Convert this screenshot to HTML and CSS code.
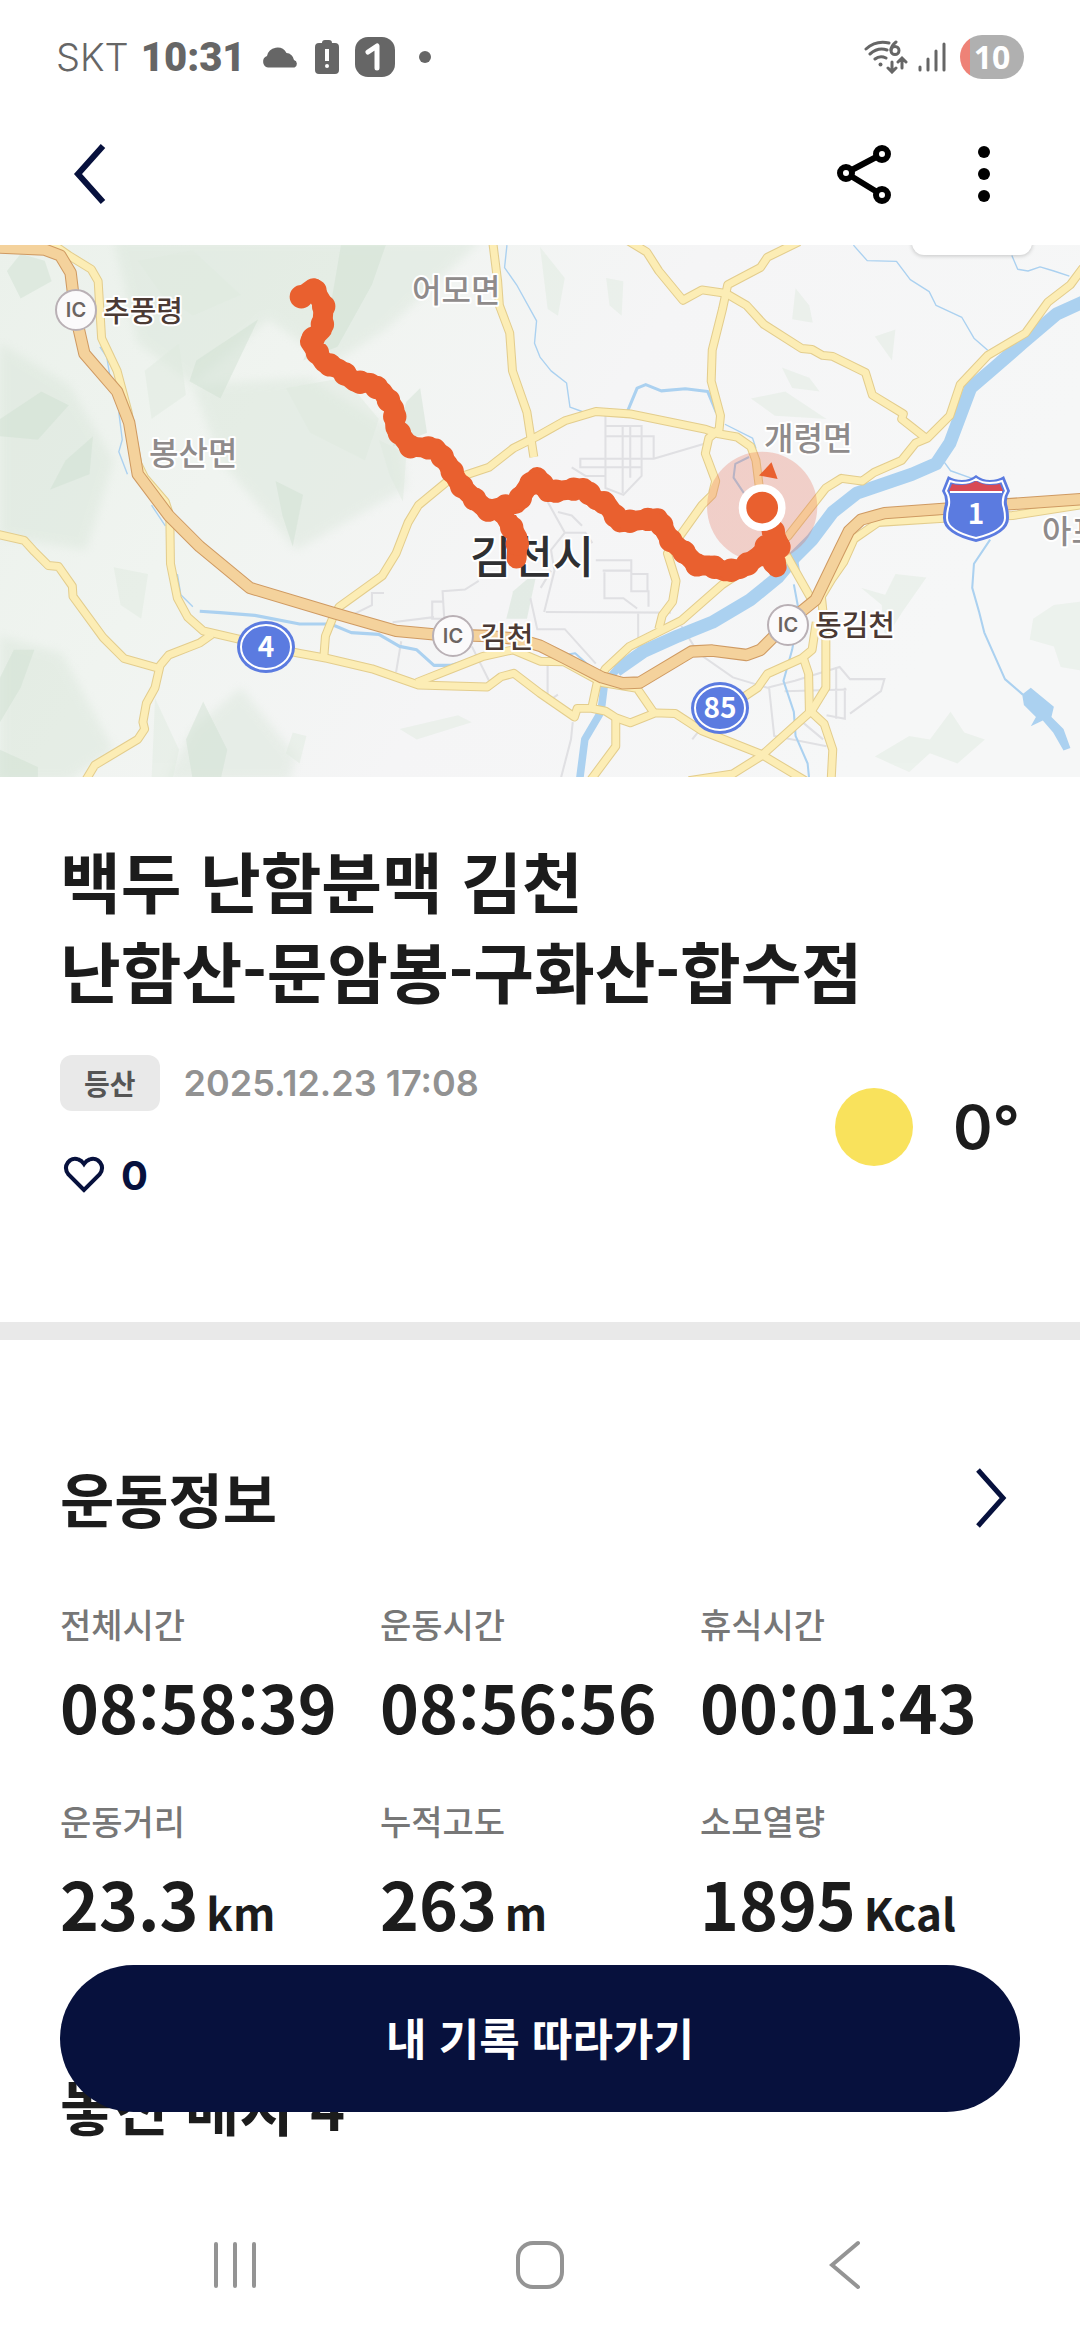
FILE: index.html
```html
<!DOCTYPE html>
<html lang="ko">
<head>
  <meta charset="UTF-8">
  <meta name="viewport" content="width=device-width, initial-scale=1">
  <title>운동 기록</title>
  <link rel="stylesheet" href="styles.css">
</head>
<body>
  <div class="statusbar">
    <div class="status-left">
      <span class="carrier">SKT</span>
      <span class="clock">10:31</span>
      <svg class="ico-cloud" width="37" height="22" viewBox="0 0 37 22"><path d="M6 21.500a6 6 0 0 1-1-11.500A10.500 10.500 0 0 1 24.500 7 8 8 0 0 1 32 14a4 4 0 0 1 .5 7.500z" fill="#666"/></svg>
      <svg class="ico-alert" width="24" height="34" viewBox="0 0 24 34"><path d="M7 3a3 3 0 0 1 3-3h4a3 3 0 0 1 3 3h3a4 4 0 0 1 4 4v23a4 4 0 0 1-4 4H4a4 4 0 0 1-4-4V7a4 4 0 0 1 4-4z" fill="#666"/><path d="M10 9h4v12h-4z" fill="#fff"/><circle cx="12" cy="26" r="2" fill="#fff"/></svg>
      <svg class="ico-one" width="40" height="40" viewBox="0 0 40 40"><rect width="40" height="40" rx="13" fill="#666"/><path d="M13 15l9-6v22" fill="none" stroke="#fff" stroke-width="5" stroke-linecap="round" stroke-linejoin="round"/></svg>
      <span class="more-dot"></span>
    </div>
    <div class="status-right">
      <svg width="44" height="34" viewBox="0 0 44 34" fill="none" stroke="#666" stroke-width="3" stroke-linecap="round">
        <path d="M2 9Q12 0 25 3M6 14q8-7 17-4M11 19q5-4 11-1"/>
        <circle cx="16.500" cy="24.500" r="2" fill="#666" stroke="none"/>
        <path d="M32 2q-5 4-5 8" stroke-width="3"/><circle cx="31" cy="10.500" r="4" stroke-width="3"/>
        <path d="M28 22v9M24 28l4 4 4-4M38 28v-9M34 22l4-4 4 4"/>
      </svg>
      <svg width="28" height="32" viewBox="0 0 28 32" stroke="#666" stroke-width="3" stroke-linecap="round"><path d="M2 26v3M10 18v11M18 10v19M26 3v26"/></svg>
      <span class="battery">10</span>
    </div>
  </div>

  <header class="appbar">
    <button type="button" class="icon-btn" aria-label="뒤로">
      <svg width="34" height="62" viewBox="0 0 34 62"><path d="M31 3L6 31l25 28" fill="none" stroke="#07113d" stroke-width="6"/></svg>
    </button>
    <div class="actions">
      <button type="button" class="icon-btn" aria-label="공유">
        <svg width="54" height="60" viewBox="0 0 54 60" fill="none" stroke="#000" stroke-width="6"><path d="M9 29L45 10M9 29l36 22"/><g fill="#fff"><circle cx="9" cy="29" r="6"/><circle cx="45" cy="10" r="6"/><circle cx="45" cy="51" r="6"/></g></svg>
      </button>
      <button type="button" class="icon-btn" aria-label="더보기">
        <svg width="12" height="58" viewBox="0 0 12 58"><circle cx="6" cy="7" r="6"/><circle cx="6" cy="29" r="6"/><circle cx="6" cy="51" r="6"/></svg>
      </button>
    </div>
  </header>

  <div class="map">
    <svg viewBox="0 0 1080 532" preserveAspectRatio="xMidYMid slice">
      <defs>
        <linearGradient id="land" x1="0" y1="0" x2="1" y2=".3">
          <stop offset="0" stop-color="#ebf1eb"/>
          <stop offset=".3" stop-color="#f0f4f0"/>
          <stop offset=".6" stop-color="#f5f5f6"/>
          <stop offset="1" stop-color="#f6f7f7"/>
        </linearGradient>
        <filter id="soft"><feGaussianBlur stdDeviation="14"/></filter>
        <g id="roads">
          <path d="M150 10L200 45 265 85 285 120 295 285 340 380 372 500 400 650 420 690 480 760 493 800 495 940 515 1040 545 1095 590 1135 690 1158 770 1180 870 1200 950 1215 1080 1245 1215 1292 1415 1298 1455 1268 1492 1258 1568 1316 1668 1385 1676 1360 1718 1360 1758 1368 1788 1387 1830 1402 1903 1373 1961 1375 2038 1425 2208 1492 2338 1570"/>
          <path d="M-5 855L70 872 100 905 140 945 170 948 210 1005 212 1035 300 1155 360 1215 455 1242M615 1145L580 1170 490 1205 465 1235 450 1300 425 1345 415 1400 420 1420 400 1450 275 1525 245 1575"/>
          <path d="M940 1215L945 1150 965 1100 985 1065 1110 975 1150 910 1185 820 1215 770 1300 700 1420 660 1490 605 1560 570 1640 525 1730 498 1830 505 2050 550 2088 563 2140 572 2180 600 2195 640 2205 720"/>
          <path d="M1430 0L1445 120 1450 190 1480 270 1488 380 1530 500 1550 630"/>
          <path d="M1210 1285L1400 1210 1490 1190 1568 1223 1638 1225 1748 1285 1850 1302 1898 1372"/>
          <path d="M1718 1360L1733 1290 1758 1245 1828 1180 1978 1105 2098 1000 2218 920 2288 860 2398 720 2443 692 2503 700 2538 675 2618 640 2658 590 2693 575 2758 510 2788 420 2868 335 2978 270 3043 180 3108 130 3145 80"/>
          <path d="M1913 1130L1923 1090 1953 1050 1963 990 1938 910 1988 840 2038 770 2068 740 2078 700 2048 620 2058 575 2088 550 2092 510 2065 410 2068 320 2098 200 2113 130 2208 80 2228 50 2320 5"/>
          <path d="M1820 0L1878 35 1913 90 1983 175 2038 145 2108 155 2168 190 2218 245 2328 315 2358 318 2388 335 2418 338 2513 385 2533 450 2623 505 2618 520 2688 575"/>
          <path d="M2278 905L2360 1050M3145 768L2940 800 2740 808 2550 820 2480 868 2450 935 2415 985 2385 1035 2398 1160 2398 1300 2358 1365 2258 1455 2208 1500 2128 1550 2000 1570"/>
          <path d="M2370 1110L2358 1190 2328 1215 2228 1260 2200 1300 2140 1340M2333 1215L2348 1260 2350 1365 2393 1405 2418 1480 2413 1575M1788 1387L1788 1470 1710 1575"/>
        </g>
        <path id="highway" d="M-5 22L130 28 175 45 205 95 220 220 245 330 340 440 375 530 400 680 490 800 580 890 725 1010 975 1085 1150 1135 1260 1145 1420 1150 1500 1158 1568 1178 1638 1213 1748 1270 1808 1287 1858 1285 2008 1195 2068 1192 2168 1205 2208 1190 2288 1110 2368 1045 2438 900 2465 845 2500 812 2568 793 2748 780 3145 752"/>
        <path id="track" d="M875 165L910 140 940 190 935 260 900 295 940 355 985 375 1030 412 1075 415 1110 440 1145 490 1148 545 1190 600 1265 605 1300 650 1335 710 1375 750 1415 785 1500 765 1530 720 1560 688 1590 732 1695 720 1730 755 1760 765 1800 820 1910 808 1945 870 1990 910 2025 945 2060 945 2105 962 2150 955 2200 920 2265 890 2225 800M2225 890L2255 950M1460 790L1503 865 1500 925"/>
      </defs>
      <rect width="1080" height="532" fill="url(#land)"/>

      <g transform="translate(0 -5) scale(.3444)">
        <!-- hills -->
        <g fill="#d5e3d6" opacity=".4" filter="url(#soft)">
          <path d="M330 0H1400L1120 260 960 360 780 230 560 420 400 300z"/>
          <path d="M0 300L200 420 330 640 250 900 0 860z"/>
          <path d="M560 420L900 400 1160 560 1180 720 860 900 640 640z"/>
          <path d="M0 1150L180 1200 330 1480 200 1570 0 1570z"/>
          <path d="M560 1420L700 1300 860 1500 840 1570 480 1570z"/>
        </g>
        <g fill="#cfe0d1" opacity=".45">
          <path d="M990 15H1120L1080 130 980 310 880 350 960 190z"/>
          <path d="M750 230L640 460 550 410 570 350z"/>
          <path d="M0 520L120 440 200 480 110 580 0 570z"/>
          <path d="M270 570L260 680 145 725 190 640z"/>
          <path d="M800 700L880 740 850 890 820 800z"/>
          <path d="M1220 430L1240 560 1140 600 1180 470z"/>
          <path d="M40 1190L100 1190 60 1300 0 1400V1270z"/>
          <path d="M590 1340L660 1480 640 1570 560 1570 540 1450z"/>
          <path d="M0 1480L110 1530V1570H0z"/>
          <path d="M60 40L130 60 150 120 60 170 20 90z"/>
          <path d="M1490 1020L1560 960 1530 1100 1470 1100z"/>
        </g>
        <g fill="#dfeadf" opacity=".45">
          <path d="M400 60L560 30 700 160 560 220 470 160z"/>
          <path d="M420 380L520 300 540 450 440 520z"/>
          <path d="M830 430L1000 400 1100 520 1060 640 900 560z"/>
          <path d="M1100 580L1180 620 1170 760 1130 680z"/>
          <path d="M330 950L430 970 410 1100 350 1060z"/>
          <path d="M450 1330L520 1480 500 1570H440z"/>
          <path d="M850 1430L890 1440 870 1520 830 1490z"/>
          <path d="M1160 1420L1330 1380 1370 1400 1210 1450z"/>
          <path d="M1568 20L1640 110 1620 220 1590 200zM1760 110L1810 120 1805 220 1770 190z"/>
          <path d="M2310 140L2350 190 2360 240 2300 230zM2180 460L2280 440 2400 520 2250 510z"/>
          <path d="M2500 1010L2570 1030 2600 970 2690 980 2620 1080 2570 1160 2560 1060z"/>
          <path d="M3000 1100L3060 1060 3140 1050V1250L3080 1240 3060 1180 2990 1160z"/>
          <path d="M2540 1500L2640 1440 2700 1450 2760 1370 2800 1430 2860 1450 2780 1520 2700 1490 2640 1545z"/>
          <path d="M2270 370L2350 400 2380 440 2300 430zM2540 280L2600 260 2590 350z"/>
        </g>

        <!-- local streets -->
        <g fill="none" stroke="#e0e0e3" stroke-width="6">
          <path d="M1758 510V720L1810 740 1863 685V540H1758M1758 570H1898V635H1685V660H1863M1808 540V735M1830 540V690M1898 635L2050 590M1660 660L1700 685H1758"/>
          <path d="M1590 760L1640 850 1600 900 1610 960 1580 1080M1620 790L1660 800 1690 830M1640 850H1700L1720 880M1730 930H1833V1020H1883V1065M1750 960H1830M1755 965V1040H1810L1850 1070M1833 970H1880V1020M1585 1080L1948 1082M1853 1080V1200M1570 1010L1600 960"/>
          <path d="M1390 990L1350 1015 1285 1020 1290 1100 1255 1100 1255 1050H1285M1115 1025H1080V1060L1020 1090M1165 1165L1150 1255M1370 1180L1420 1280M1140 1110L1260 1095M1540 1040L1560 1130 1640 1130 1730 1230"/>
          <path d="M1978 1120L2028 1200 2128 1270 2228 1300 2308 1280 2438 1240 2468 1275 2568 1275 2558 1310 2468 1375M2428 1240V1390M2453 1300V1390L2400 1380M2278 1310L2458 1305M2233 1300L2248 1440 2400 1470M2330 1400L2390 1450M1663 1400L1658 1450 1628 1565M1590 1230V1340L1620 1320M2050 1400L2010 1450"/>
        </g>

        <!-- water -->
        <g fill="none" stroke="#abd1f0" stroke-linejoin="round">
          <path stroke-width="38" d="M3145 180L3068 215 2968 300 2888 370 2818 430 2788 510 2758 590 2718 650 2648 680 2488 735 2418 790 2358 870 2308 920 2258 980 2178 1045 2068 1110 1968 1150 1868 1195 1790 1250"/>
          <path stroke-width="22" d="M1800 1235L1755 1290 1745 1370 1698 1450 1682 1575"/>
          <path stroke-width="9" d="M580 1078L640 1082 740 1090 870 1115 960 1115 1020 1140 1100 1145 1160 1180 1210 1190 1260 1235 1310 1235 1400 1210M1823 495L1850 430 1875 420 1920 438 1990 432 2055 440 2080 500M2310 910L2325 1000"/>
          <path stroke-width="6" d="M2875 870L2828 940 2823 1010 2843 1080 2858 1140 2918 1275 2970 1320M2175 630L2135 650 2130 690 2160 735M2305 1000L2320 1080 2300 1190 2275 1280 2305 1370 2310 1440 2345 1520 2350 1570M1640 1205L1670 1200 1720 1245"/>
          <path stroke-width="4" d="M2478 15L2518 60 2603 62 2643 115 2698 150 2718 190 2793 225 2828 285 2868 320M1472 15L1465 80 1500 130 1558 235 1552 300 1568 340 1600 380 1645 415 1655 485 1690 498M2105 535L2185 575 2195 605M2738 640L2760 670 2830 695M2938 45L2955 85 2985 90 3020 78 3060 90 3105 105M290 310L310 340 320 400M345 500L355 580 345 615 370 680M440 770L480 830M515 970L525 1030 560 1065"/>
        </g>
        <path fill="#abd1f0" d="M2968 1320L2993 1300 3060 1355 3053 1385 3088 1420 3108 1475 3088 1482 3058 1430 3028 1395 2993 1412 3008 1385 2973 1350z"/>

        <g fill="none" stroke-linejoin="round">
          <use href="#roads" stroke="#e3cd8d" stroke-width="26"/>
          <use href="#roads" stroke="#fcedb5" stroke-width="20"/>
          <use href="#highway" stroke="#cf9a62" stroke-width="36"/>
          <use href="#highway" stroke="#f4d29c" stroke-width="30"/>
        </g>
      </g>

      <!-- place names and road signs -->
      <g class="town">
        <text x="412" y="57">어모면</text>
        <text x="149" y="220">봉산면</text>
        <text x="764" y="205">개령면</text>
        <text x="1042" y="298">아포읍</text>
      </g>
      <text class="city" x="470" y="329">김천시</text>
      <g class="exit">
        <circle cx="76" cy="65" r="20"/><circle cx="453" cy="391" r="20"/><circle cx="788" cy="380" r="20"/>
        <text class="ic" x="76" y="72">IC</text><text class="ic" x="453" y="398">IC</text><text class="ic" x="788" y="387">IC</text>
        <text x="103" y="77">추풍령</text>
        <text x="480" y="403">김천</text>
        <text x="815" y="391">동김천</text>
      </g>
      <g class="route">
        <ellipse cx="266" cy="402" rx="29" ry="26"/><ellipse class="ring" cx="266" cy="402" rx="25" ry="22"/>
        <text x="266" y="412">4</text>
        <ellipse cx="720" cy="463" rx="29" ry="26"/><ellipse class="ring" cx="720" cy="463" rx="25" ry="22"/>
        <text x="720" y="473">85</text>
        <path d="M976 230q6 5 14 5 8 0 14-4l6 15q-4 6-3 13 2 7 2 14 0 16-33 24-33-8-33-24 0-7 2-14 1-7-3-13l6-15q6 4 14 4 8 0 14-5z"/>
        <path class="ring" d="M976 234q6 4 14 4 7 0 12-2l4 10q-4 6-3 14 2 6 2 13 0 13-29 20-29-7-29-20 0-7 2-13 1-8-3-14l4-10q5 2 12 2 8 0 14-4z"/>
        <path fill="#d84a56" d="M952 239q14 3 24-3 10 6 24 3l3 7H949z"/>
        <path d="M950 247h52" stroke="#fff" stroke-width="2"/>
        <text x="976" y="279">1</text>
      </g>

      <!-- recorded track, the round dashes give it a beaded edge -->
      <g transform="translate(0 -5) scale(.3444)">
        <circle cx="2213" cy="775" r="160" fill="#e25b40" opacity=".25"/>
        <g fill="none" stroke="#e9602f" stroke-linecap="round" stroke-linejoin="round">
          <use href="#track" stroke-width="58"/>
          <use href="#track" stroke-width="68" stroke-dasharray="0 52"/>
        </g>
        <path d="M2240 645L2258 694 2204 684z" fill="#e9602f"/>
        <circle cx="2213" cy="777" r="57" fill="#e9602f" stroke="#fff" stroke-width="22"/>
      </g>
    </svg>
    <div class="map-card"></div>
  </div>

  <section class="summary">
    <h1>백두 난함분맥 김천<br>난함산-문암봉-구화산-합수점</h1>
    <div class="summary-row">
      <div>
        <div class="meta">
          <span class="chip">등산</span>
          <time datetime="2025-12-23T17:08">2025.12.23 17:08</time>
        </div>
        <button type="button" class="like">
          <svg width="42" height="38" viewBox="0 0 42 38"><path d="M21 34L5.500 18.500C-1 10 7 0 15.500 3.500 18.500 4.500 20 6.500 21 8c1-1.500 2.500-3.500 5.500-4.500C35 0 43 10 36.500 18.500z" fill="none" stroke="#07113d" stroke-width="4"/></svg>
          <span>0</span>
        </button>
      </div>
      <div class="weather">
        <span class="sun"></span>
        <span>0°</span>
      </div>
    </div>
  </section>

  <section class="workout">
    <a href="#workout" class="section-head">
      <h2>운동정보</h2>
      <svg width="36" height="62" viewBox="0 0 36 62"><path d="M4 3l25 28L4 59" fill="none" stroke="#07113d" stroke-width="5"/></svg>
    </a>
    <dl class="stats">
      <div><dt>전체시간</dt><dd>08:58:39</dd></div>
      <div><dt>운동시간</dt><dd>08:56:56</dd></div>
      <div><dt>휴식시간</dt><dd>00:01:43</dd></div>
      <div><dt>운동거리</dt><dd>23.3<small>km</small></dd></div>
      <div><dt>누적고도</dt><dd>263<small>m</small></dd></div>
      <div><dt>소모열량</dt><dd>1895<small>Kcal</small></dd></div>
    </dl>
  </section>

  <section class="badges">
    <h2>놓친 배지 4</h2>
  </section>

  <button type="button" class="follow">내 기록 따라가기</button>

  <nav class="navbar">
    <button type="button" class="icon-btn" aria-label="최근 앱"><svg width="44" height="48" viewBox="0 0 44 48" stroke="#949494" stroke-width="4" stroke-linecap="round"><path d="M3 3v42M22 3v42M41 3v42"/></svg></button>
    <button type="button" class="icon-btn" aria-label="홈"><svg width="50" height="50" viewBox="0 0 50 50"><rect x="3" y="3" width="44" height="44" rx="15" fill="none" stroke="#949494" stroke-width="4"/></svg></button>
    <button type="button" class="icon-btn" aria-label="뒤로"><svg width="32" height="50" viewBox="0 0 32 50"><path d="M29 3L3 25l26 22" fill="none" stroke="#949494" stroke-width="4" stroke-linecap="round"/></svg></button>
  </nav>
</body>
</html>
```

FILE: styles.css
```css
* {
  box-sizing: border-box;
}

body {
  margin: 0;
  padding-bottom: 150px;
  background: #fff;
  color: #1c1c1c;
  font-family: "Noto Sans CJK KR", sans-serif;
}

h1, h2, dl, dd {
  margin: 0;
}

h1, h2 {
  font-weight: 700;
}

button {
  border: none;
  background: none;
  padding: 0;
  font-family: inherit;
  cursor: pointer;
}

svg {
  display: block;
}

/* status bar */
.statusbar {
  display: flex;
  justify-content: space-between;
  align-items: center;
  height: 118px;
  padding: 0 56px 4px;
  color: #666;
}

.status-left,
.status-right {
  display: flex;
  align-items: center;
}

.carrier {
  font-family: Inter, sans-serif;
  font-size: 38px;
  font-weight: 300;
}

.clock {
  margin: 0 16px 0 12px;
  font-family: Roboto, sans-serif;
  font-size: 40px;
  font-weight: 900;
}

.ico-alert {
  margin: 0 16px;
}

.more-dot {
  width: 12px;
  height: 12px;
  margin-left: 24px;
  border-radius: 50%;
  background: #666;
}

.status-right {
  gap: 10px;
}

.battery {
  width: 64px;
  height: 44px;
  margin-left: 4px;
  border-radius: 22px;
  background: linear-gradient(90deg, #ee8277 10px, #b0b0b0 10px);
  color: #fff;
  font-family: "Noto Sans", sans-serif;
  font-size: 32px;
  font-weight: 700;
  line-height: 44px;
  text-align: center;
}

/* app bar */
.appbar {
  display: flex;
  justify-content: space-between;
  align-items: center;
  height: 127px;
  padding: 0 90px 8px 72px;
  padding-bottom: 16px;
}

.actions {
  display: flex;
  align-items: center;
  gap: 87px;
}

/* map */
.map {
  position: relative;
  height: 532px;
  overflow: hidden;
}

.map svg {
  width: 100%;
  height: 100%;
}

.map-card {
  position: absolute;
  top: -40px;
  right: 48px;
  width: 120px;
  height: 50px;
  border-radius: 12px;
  background: #fff;
  box-shadow: 0 1px 4px rgba(0, 0, 0, 0.2);
}

.map text {
  paint-order: stroke;
  stroke: #fff;
  stroke-width: 4px;
  stroke-linejoin: round;
}

.town {
  font-size: 32px;
  font-weight: 500;
  fill: #8f8b8b;
}

.city {
  font-size: 45px;
  font-weight: 500;
  fill: #2f3032;
}

.exit {
  font-size: 29px;
  font-weight: 500;
  fill: #4b3a34;
}

.exit circle {
  fill: #fbfafb;
  stroke: #b9b0b5;
  stroke-width: 2px;
}

.map .ic {
  font-family: Inter, sans-serif;
  font-size: 20px;
  font-weight: 600;
  fill: #6c6562;
  stroke: none;
  text-anchor: middle;
}

.route {
  fill: #5b7be0;
}

.route .ring {
  fill: none;
  stroke: #fff;
  stroke-width: 2px;
}

.map .route text {
  font-size: 28px;
  font-weight: 700;
  fill: #fff;
  stroke: none;
  text-anchor: middle;
}

/* summary */
.summary {
  padding: 57px 60px 123px;
  border-bottom: 18px solid #e9e9e9;
}

.summary h1 {
  font-size: 66px;
  line-height: 90px;
}

.summary-row {
  display: flex;
  justify-content: space-between;
  align-items: center;
  margin-top: 41px;
}

.meta {
  display: flex;
  align-items: center;
  gap: 24px;
}

.chip {
  height: 56px;
  padding: 0 24px;
  border-radius: 12px;
  background: #e9e9e9;
  color: #555;
  font-size: 28px;
  font-weight: 700;
  line-height: 56px;
}

.meta time {
  color: #929292;
  font-family: Inter, sans-serif;
  font-size: 36px;
  font-weight: 600;
}

.like {
  display: flex;
  align-items: center;
  gap: 16px;
  height: 48px;
  margin-top: 40px;
  padding-left: 3px;
  color: #07113d;
  font-family: Inter, sans-serif;
  font-size: 40px;
  font-weight: 700;
}

.weather {
  display: flex;
  align-items: center;
  gap: 40px;
  font-family: Inter, sans-serif;
  font-size: 60px;
  font-weight: 600;
}

.sun {
  width: 78px;
  height: 78px;
  border-radius: 50%;
  background: #f9e25c;
}

/* workout */
.workout {
  padding: 110px 60px 0;
}

.section-head {
  display: flex;
  justify-content: space-between;
  align-items: center;
  padding-right: 10px;
  color: inherit;
  text-decoration: none;
}

h2 {
  font-size: 59px;
  line-height: 96px;
}

.stats {
  display: grid;
  grid-template-columns: repeat(3, 1fr);
  row-gap: 43px;
  margin-top: 53px;
}

.stats dt {
  color: #777;
  font-size: 34px;
  font-weight: 500;
  line-height: 50px;
}

.stats dd {
  margin-top: 8px;
  font-size: 66px;
  font-weight: 700;
  font-variant-ligatures: no-contextual;
  line-height: 96px;
  white-space: nowrap;
}

.stats small {
  margin-left: 8px;
  font-size: 44px;
}

.badges {
  padding: 98px 60px 0;
}

/* floats above the page */
.follow {
  position: fixed;
  right: 60px;
  bottom: 228px;
  left: 60px;
  height: 147px;
  padding-bottom: 4px;
  border-radius: 74px;
  background: #07113d;
  color: #fff;
  font-size: 44px;
  font-weight: 700;
}

.navbar {
  position: fixed;
  right: 0;
  bottom: 0;
  left: 0;
  display: flex;
  justify-content: space-between;
  align-items: center;
  height: 150px;
  padding: 0 19%;
  background: #fff;
}

.navbar .icon-btn {
  display: flex;
  justify-content: center;
  width: 60px;
}
```
